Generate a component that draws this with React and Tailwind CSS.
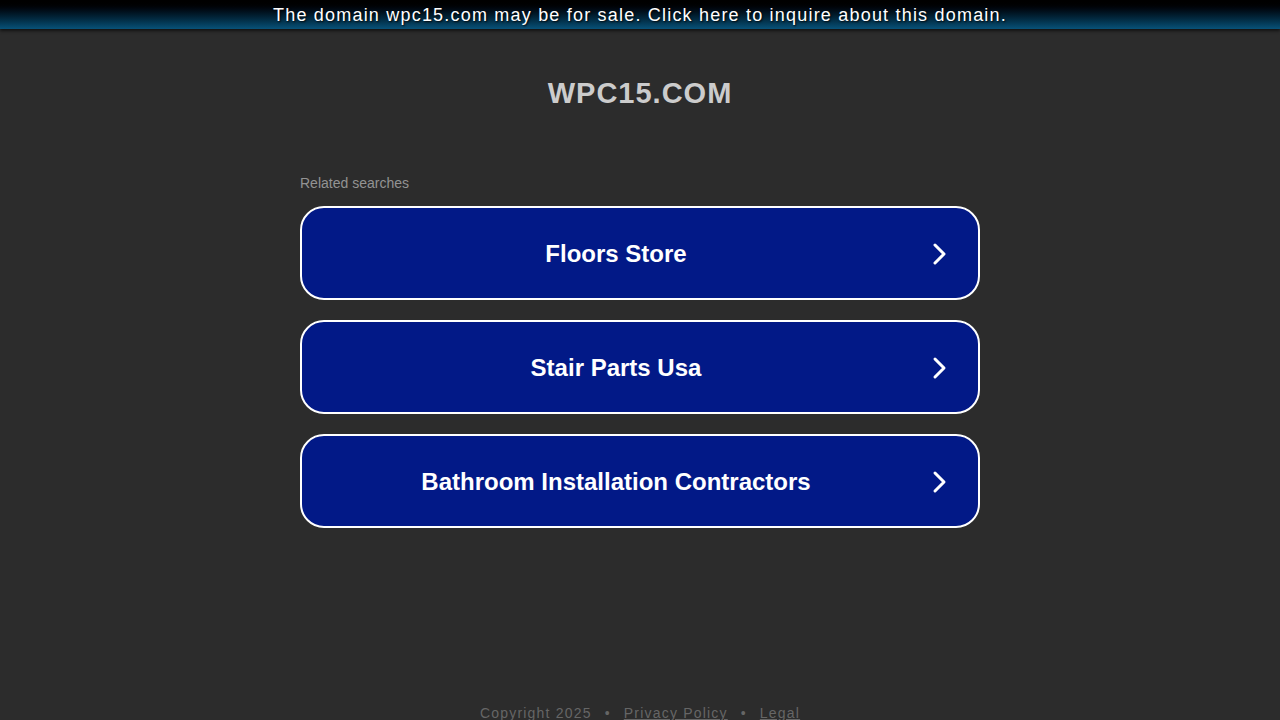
import React from 'react';

const searches = ['Floors Store', 'Stair Parts Usa', 'Bathroom Installation Contractors'];

function Chevron() {
  return (
    <svg width="16" height="24" viewBox="0 0 16 24" fill="none" className="shrink-0">
      <path d="M3 3 L12 12 L3 21" stroke="white" strokeWidth="3" strokeLinecap="round" strokeLinejoin="round" />
    </svg>
  );
}

export default function App() {
  return (
    <div className="min-h-[720px] bg-[#2c2c2c] flex flex-col font-['Liberation_Sans',Arial,sans-serif]">
      {/* sale banner */}
      <div className="h-[29px] bg-gradient-to-b from-[#000000] to-[#085279] shadow-[0_2px_3px_rgba(0,0,0,0.6)] flex items-center justify-center">
        <p className="text-[18px] leading-none text-white tracking-[1.2px] [text-shadow:1px_1px_2px_rgba(0,0,0,0.9)]">
          The domain wpc15.com may be for sale. Click here to inquire about this domain.
        </p>
      </div>

      <h1 className="mt-[47px] text-center text-[29px] leading-[34px] font-bold text-[#cccccc] tracking-[1px]">
        WPC15.COM
      </h1>

      <div className="w-[680px] mx-auto mt-[65px]">
        <p className="text-[14px] leading-[16px] text-[#939393]">Related searches</p>
        <div className="mt-[15px] flex flex-col gap-[20px]">
          {searches.map((s) => (
            <div
              key={s}
              className="h-[94px] rounded-[24px] border-2 border-white bg-[#021987] flex items-center pt-[2px] pl-[28px] pr-[30px]"
            >
              <span className="flex-1 text-center text-[24px] font-bold text-white">{s}</span>
              <div className="ml-[30px]">
                <Chevron />
              </div>
            </div>
          ))}
        </div>
      </div>

      <div className="mt-auto h-[14px] flex justify-center items-start text-[14px] leading-[16px] text-[#666666] tracking-[1.2px] overflow-visible">
        <span className="-mt-[1px] flex gap-[13px]">
          <span>Copyright 2025</span>
          <span>•</span>
          <span className="underline">Privacy Policy</span>
          <span>•</span>
          <span className="underline">Legal</span>
        </span>
      </div>
    </div>
  );
}
